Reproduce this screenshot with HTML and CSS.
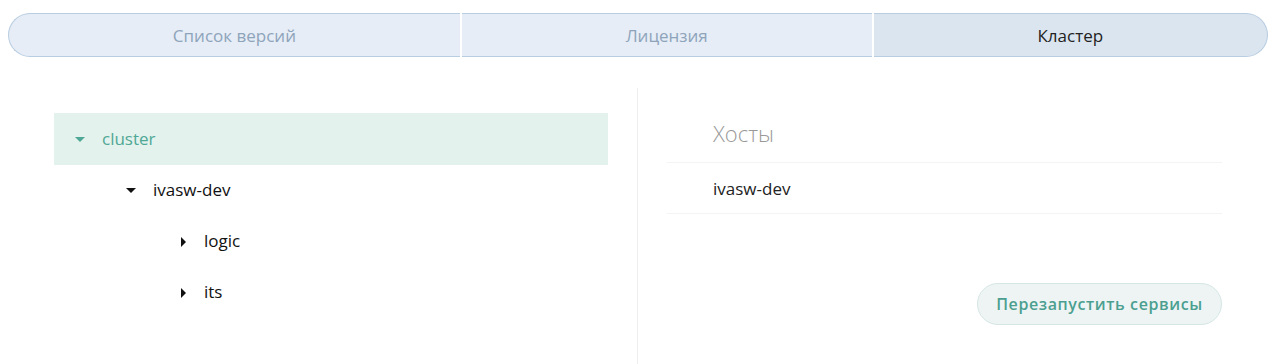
FILE: index.html
```html
<!DOCTYPE html>
<html lang="ru">
<head>
<meta charset="utf-8">
<link rel="stylesheet" href="styles.css">
</head>
<body>
<div class="tabs">
  <div class="tab">Список версий</div>
  <div class="tab">Лицензия</div>
  <div class="tab active">Кластер</div>
</div>
<div class="content">
  <div class="tree">
    <div class="node selected lvl0"><span class="caret down"></span><span class="label">cluster</span></div>
    <div class="node lvl1"><span class="caret down"></span><span class="label">ivasw-dev</span></div>
    <div class="node lvl2"><span class="caret right"></span><span class="label">logic</span></div>
    <div class="node lvl2"><span class="caret right"></span><span class="label">its</span></div>
  </div>
  <div class="panel">
    <div class="hosts">
      <div class="hosts-title">Хосты</div>
      <div class="host-row">ivasw-dev</div>
    </div>
    <div class="actions">
      <button class="btn">Перезапустить сервисы</button>
    </div>
  </div>
</div>
</body>
</html>
```
FILE: styles.css
```css
* { box-sizing: border-box; }
html, body { margin: 0; padding: 0; background: #fff; }
body {
  font-family: "Open Sans", "Liberation Sans", sans-serif;
  color: #222;
  height: 364px;
  overflow: hidden;
}
.tabs {
  display: flex;
  gap: 2px;
  margin: 13px 12px 0 8px;
  height: 44px;
}
.tab {
  flex: 1 1 auto;
  display: flex;
  align-items: center;
  justify-content: center;
  background: #e6edf6;
  border-top: 1px solid #b9cde1;
  border-bottom: 1px solid #b9cde1;
  color: #8ea4bb;
  font-size: 17px;
}
.tab:first-child {
  border-left: 1px solid #b9cde1;
  border-radius: 22px 0 0 22px;
}
.tab:last-child {
  border-right: 1px solid #b9cde1;
  border-radius: 0 22px 22px 0;
}
.tab.active {
  background: #dbe5ef;
  color: #222;
}
.content {
  display: grid;
  grid-template-columns: 638px 1fr;
  margin-top: 31px;
  height: 276px;
}
.tree {
  border-right: 1px solid #eeeeee;
  padding: 25px 29px 0 54px;
}
.node {
  height: 51px;
  display: flex;
  align-items: center;
  font-size: 17px;
  color: #111;
}
.node.selected {
  background: #e3f2ec;
  color: #4fa896;
  height: 52px;
}
.node.lvl0 { padding-left: 21px; }
.node.lvl1 { padding-left: 72px; }
.node.lvl2 { padding-left: 124px; }
.caret {
  width: 10px;
  height: 10px;
  display: inline-flex;
  align-items: center;
  justify-content: center;
  margin-right: 17px;
}
.caret.down::before {
  content: "";
  border-left: 5px solid transparent;
  border-right: 5px solid transparent;
  border-top: 5px solid currentColor;
}
.caret.right::before {
  content: "";
  border-top: 5px solid transparent;
  border-bottom: 5px solid transparent;
  border-left: 5px solid currentColor;
}
.node.lvl2 .caret { margin-right: 16px; }
.label { line-height: 1; position: relative; top: -1px; }
.panel {
  padding: 0 58px 0 29px;
}
.hosts-title {
  font-size: 22px;
  font-weight: 300;
  color: #999;
  line-height: 30px;
  padding: 30px 0 14px 46px;
  border-bottom: 1px solid #f4f4f4;
}
.host-row {
  height: 51px;
  display: flex;
  align-items: center;
  padding-left: 46px;
  font-size: 17px;
  color: #222;
  border-bottom: 1px solid #f4f4f4;
}
.actions {
  display: flex;
  justify-content: flex-end;
  margin-top: 69px;
}
.btn {
  height: 42px;
  width: 245px;
  border-radius: 21px;
  background: #eef4f4;
  border: 1px solid #d5e6e5;
  color: #4b9f90;
  font-family: "Open Sans", "Liberation Sans", sans-serif;
  font-size: 16px;
  font-weight: 600;
  letter-spacing: 0.6px;
  padding: 0;
}
```
